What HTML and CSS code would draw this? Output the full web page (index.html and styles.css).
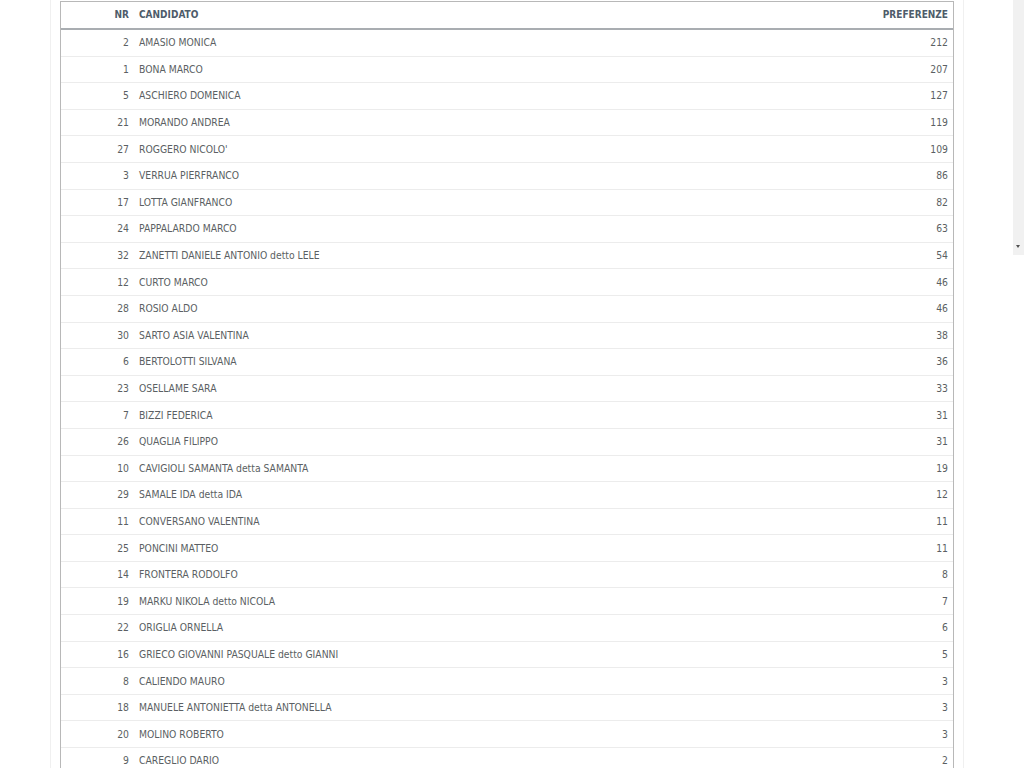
FILE: index.html
```html
<!DOCTYPE html>
<html lang="it">
<head>
<meta charset="utf-8">
<title>Preferenze</title>
<link rel="stylesheet" href="styles.css">
</head>
<body>
<div class="page">
  <div class="panel">
    <div class="results">
      <div class="row head">
        <div class="nr">NR</div>
        <div class="name">CANDIDATO</div>
        <div class="pref">PREFERENZE</div>
      </div>
      <div class="row"><div class="nr">2</div><div class="name">AMASIO MONICA</div><div class="pref">212</div></div>
      <div class="row"><div class="nr">1</div><div class="name">BONA MARCO</div><div class="pref">207</div></div>
      <div class="row"><div class="nr">5</div><div class="name">ASCHIERO DOMENICA</div><div class="pref">127</div></div>
      <div class="row"><div class="nr">21</div><div class="name">MORANDO ANDREA</div><div class="pref">119</div></div>
      <div class="row"><div class="nr">27</div><div class="name">ROGGERO NICOLO'</div><div class="pref">109</div></div>
      <div class="row"><div class="nr">3</div><div class="name">VERRUA PIERFRANCO</div><div class="pref">86</div></div>
      <div class="row"><div class="nr">17</div><div class="name">LOTTA GIANFRANCO</div><div class="pref">82</div></div>
      <div class="row"><div class="nr">24</div><div class="name">PAPPALARDO MARCO</div><div class="pref">63</div></div>
      <div class="row"><div class="nr">32</div><div class="name">ZANETTI DANIELE ANTONIO detto LELE</div><div class="pref">54</div></div>
      <div class="row"><div class="nr">12</div><div class="name">CURTO MARCO</div><div class="pref">46</div></div>
      <div class="row"><div class="nr">28</div><div class="name">ROSIO ALDO</div><div class="pref">46</div></div>
      <div class="row"><div class="nr">30</div><div class="name">SARTO ASIA VALENTINA</div><div class="pref">38</div></div>
      <div class="row"><div class="nr">6</div><div class="name">BERTOLOTTI SILVANA</div><div class="pref">36</div></div>
      <div class="row"><div class="nr">23</div><div class="name">OSELLAME SARA</div><div class="pref">33</div></div>
      <div class="row"><div class="nr">7</div><div class="name">BIZZI FEDERICA</div><div class="pref">31</div></div>
      <div class="row"><div class="nr">26</div><div class="name">QUAGLIA FILIPPO</div><div class="pref">31</div></div>
      <div class="row"><div class="nr">10</div><div class="name">CAVIGIOLI SAMANTA detta SAMANTA</div><div class="pref">19</div></div>
      <div class="row"><div class="nr">29</div><div class="name">SAMALE IDA detta IDA</div><div class="pref">12</div></div>
      <div class="row"><div class="nr">11</div><div class="name">CONVERSANO VALENTINA</div><div class="pref">11</div></div>
      <div class="row"><div class="nr">25</div><div class="name">PONCINI MATTEO</div><div class="pref">11</div></div>
      <div class="row"><div class="nr">14</div><div class="name">FRONTERA RODOLFO</div><div class="pref">8</div></div>
      <div class="row"><div class="nr">19</div><div class="name">MARKU NIKOLA detto NICOLA</div><div class="pref">7</div></div>
      <div class="row"><div class="nr">22</div><div class="name">ORIGLIA ORNELLA</div><div class="pref">6</div></div>
      <div class="row"><div class="nr">16</div><div class="name">GRIECO GIOVANNI PASQUALE detto GIANNI</div><div class="pref">5</div></div>
      <div class="row"><div class="nr">8</div><div class="name">CALIENDO MAURO</div><div class="pref">3</div></div>
      <div class="row"><div class="nr">18</div><div class="name">MANUELE ANTONIETTA detta ANTONELLA</div><div class="pref">3</div></div>
      <div class="row"><div class="nr">20</div><div class="name">MOLINO ROBERTO</div><div class="pref">3</div></div>
      <div class="row"><div class="nr">9</div><div class="name">CAREGLIO DARIO</div><div class="pref">2</div></div>
    </div>
  </div>
</div>
<div class="scrollstrip"><span class="arrow"></span></div>
</body>
</html>
```

FILE: styles.css
```css
html, body {
  margin: 0;
  padding: 0;
  background: #ffffff;
  overflow: hidden;
}
body {
  font-family: "DejaVu Sans Condensed", "Liberation Sans", sans-serif;
  font-size: 10.3px;
  color: #5b5f63;
}
.page {
  padding-left: 50px;
  width: 914px;
}
.panel {
  border-left: 1px solid #f0f0f0;
  border-right: 1px solid #f0f0f0;
  padding: 1px 9px 0 9px;
  height: 800px;
}
.results {
  border: 1px solid #b8b8b8;
  border-bottom: none;
}
.row {
  display: flex;
  align-items: center;
  height: 26.6px;
  box-sizing: border-box;
  padding-bottom: 1px;
  border-bottom: 1px solid #ececec;
}
.row.head {
  height: 28px;
  border-bottom: 2px solid #a9adb1;
  color: #4e5c6a;
  font-weight: 600;
  font-size: 10px;
}
.nr {
  width: 68px;
  text-align: right;
  padding-right: 10px;
}
.name {
  flex: 1;
}
.pref {
  text-align: right;
  padding-right: 5px;
}
.scrollstrip {
  position: absolute;
  top: 0;
  right: 0;
  width: 11px;
  height: 255px;
  background: #f1f1f1;
}
.arrow {
  position: absolute;
  left: 3px;
  top: 245px;
  width: 0;
  height: 0;
  border-left: 2.5px solid transparent;
  border-right: 2.5px solid transparent;
  border-top: 3px solid #505050;
}
```
